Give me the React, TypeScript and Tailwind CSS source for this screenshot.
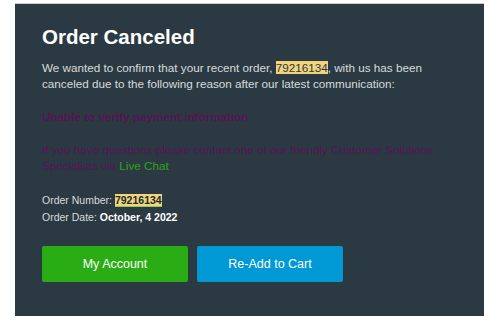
export default function App() {
    return (
        <div className="w-[500px] h-[324px] bg-white pt-[3px] pl-[15px]" style={{ fontFamily: '"Liberation Sans", Arial, sans-serif' }}>
            <div className="w-[469px] h-[313px] bg-[#2b3a42] border-t border-[#c9cdd0] pt-[21px] pl-[27px] pr-[20px]">
                <h1 className="text-[20.5px] leading-[24px] font-bold text-white">Order Canceled</h1>
                <p className="mt-[11px] text-[11.7px] leading-[16px] text-[#d6dadd]">
                    We wanted to confirm that your recent order, <span className="bg-[#f3d37c] text-[#2b3a42]">79216134</span>, with us has been canceled due to the following reason after our latest communication:
                </p>
                <p className="mt-[17px] text-[11.7px] leading-[16px] font-bold text-[#5a1257]">
                    Unable to verify payment information
                </p>
                <p className="mt-[17px] text-[11.7px] leading-[16px] text-[#5a1257]">
                    If you have questions please contact one of our friendly Customer Solutions Specialists via <span className="text-[#2ea318]">Live Chat</span>.
                </p>
                <div className="mt-[18px] text-[10.5px] leading-[17px] text-[#d6dadd]">
                    <div>
                        Order Number: <span className="font-bold text-[#1f2a30] bg-[#f0d67a] border-b border-[#9ec25a]">79216134</span>
                    </div>
                    <div>
                        Order Date: <span className="font-bold text-white">October, 4 2022</span>
                    </div>
                </div>
                <div className="mt-[20px] flex gap-[9px]">
                    <button className="w-[146px] h-[36px] rounded-[2px] bg-[#2aad14] text-white text-[12.5px]">My Account</button>
                    <button className="w-[146px] h-[36px] rounded-[2px] bg-[#0099d6] text-white text-[12.5px]">Re-Add to Cart</button>
                </div>
            </div>
        </div>
    )
}
